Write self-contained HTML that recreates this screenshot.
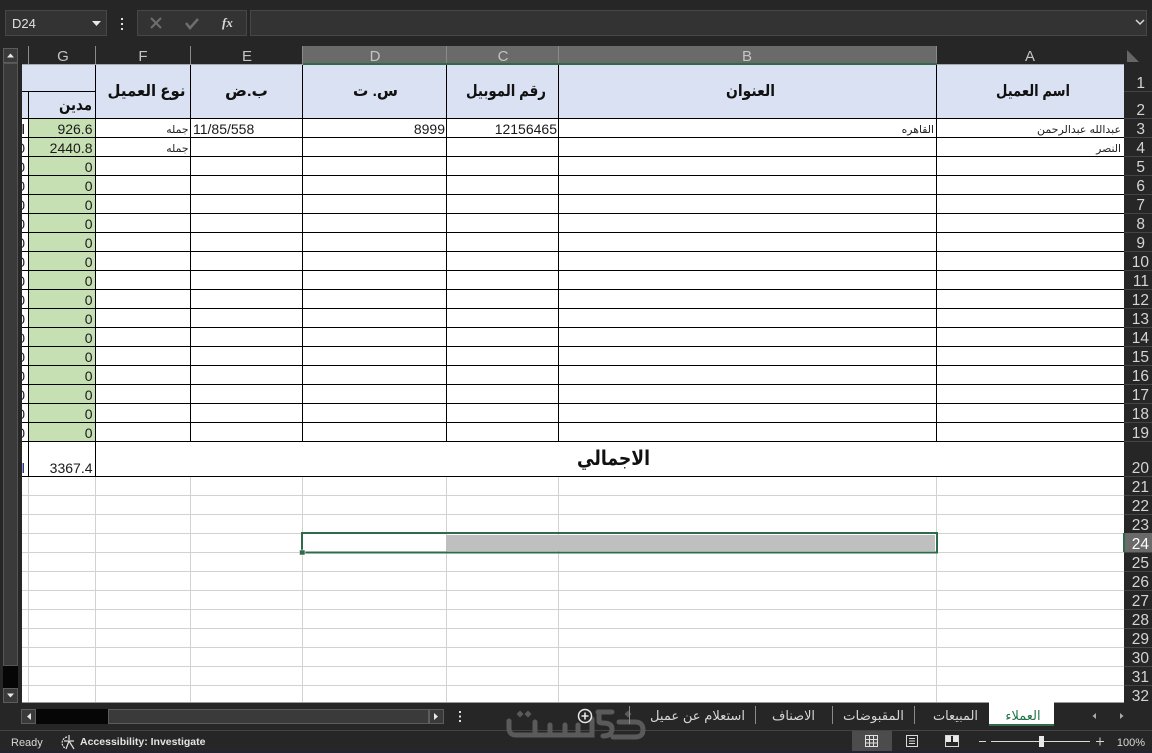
<!DOCTYPE html>
<html><head><meta charset="utf-8"><style>
html,body{margin:0;padding:0;background:#262626;overflow:hidden}
svg{display:block}
text{font-family:"Liberation Sans","DejaVu Sans",sans-serif}
.n{font-size:14px;fill:#1a1a1a;text-anchor:end}
.z{font-size:14px;fill:#1a1a1a;text-anchor:end}
.s{font-size:10.8px;fill:#222;text-anchor:end}
.h{font-size:16px;font-weight:bold;fill:#111;text-anchor:middle}
.c{font-size:15px;fill:#c4c4c4;text-anchor:middle}
.r{font-size:15.5px;fill:#d4d4d4;text-anchor:end}
.t{font-size:13px;fill:#d6d6d6;text-anchor:middle}
</style></head><body>
<svg width="1152" height="753" viewBox="0 0 1152 753" xmlns="http://www.w3.org/2000/svg">
<defs><clipPath id="sl"><rect x="22" y="65" width="6" height="420"/></clipPath></defs>
<rect width="1152" height="753" fill="#262626"/>
<!-- formula bar -->
<rect x="5.5" y="10.5" width="101" height="25" fill="#333" stroke="#474747"/>
<text x="12" y="28" font-size="13" fill="#e0e0e0">D24</text>
<path d="M92 21h9l-4.5 5z" fill="#e8e8e8"/>
<path d="M122 18v2M122 23v2M122 28v2" stroke="#e0e0e0" stroke-width="2"/>
<rect x="137.5" y="10.5" width="109" height="25" fill="#333" stroke="#474747"/>
<path d="M151 18l10 10M161 18l-10 10" stroke="#6e6e6e" stroke-width="2"/>
<path d="M186 23l4 5 8-9" stroke="#6e6e6e" stroke-width="2.5" fill="none"/>
<text x="222" y="27" font-size="13" font-style="italic" font-weight="bold" fill="#d8d8d8" style="font-family:'Liberation Serif',serif">fx</text>
<rect x="250.5" y="10.5" width="896" height="25" fill="#333" stroke="#474747"/>
<path d="M1136 20l4 4 4-4" stroke="#d8d8d8" stroke-width="1.5" fill="none"/>
<!-- column headers -->
<rect x="303" y="46" width="634" height="18" fill="#6a6a6a"/>
<path d="M28.5 46v18M95.5 46v18M190.5 46v18M302.5 46v18M446.5 46v18M558.5 46v18M936.5 46v18" stroke="#8a8a8a"/>
<rect x="22" y="64" width="1102" height="1" fill="#a8a8a8"/>
<rect x="303" y="63" width="634" height="2" fill="#2f6b4a"/>
<text class="c" x="63" y="61">G</text><text class="c" x="143" y="61">F</text><text class="c" x="247" y="61">E</text><text class="c" x="375" y="61">D</text><text class="c" x="503" y="61">C</text><text class="c" x="747" y="61">B</text><text class="c" x="1030" y="61">A</text>
<path d="M1127 62h12l-12-12z" fill="#666"/>
<!-- sheet -->
<rect x="22" y="65" width="1102" height="637" fill="#fff"/>
<rect x="22" y="65" width="1102" height="53" fill="#d9e1f2"/>
<rect x="29" y="118" width="67" height="323" fill="#c6e0b4"/>
<!-- light grid -->
<path d="M22 495.500H1124M22 514.500H1124M22 533.500H1124M22 552.500H1124M22 571.500H1124M22 590.500H1124M22 609.500H1124M22 628.500H1124M22 647.500H1124M22 666.500H1124M22 685.500H1124M28.500 476V702M95.500 476V702M190.500 476V702M302.500 476V702M446.500 476V702M558.500 476V702M936.500 476V702" stroke="#d2d2d2" fill="none"/>
<!-- black grid -->
<path d="M22 118.500H1124M22 137.500H1124M22 156.500H1124M22 175.500H1124M22 194.500H1124M22 213.500H1124M22 232.500H1124M22 251.500H1124M22 270.500H1124M22 289.500H1124M22 308.500H1124M22 327.500H1124M22 346.500H1124M22 365.500H1124M22 384.500H1124M22 403.500H1124M22 422.500H1124M22 441.500H1124M22 476.500H1124M22 91.500H95M28.500 92V476M95.500 65V476M190.500 65V441M302.500 65V441M446.500 65V441M558.500 65V441M936.500 65V441" stroke="#000" fill="none"/>
<!-- headers -->
<text class="h" x="146.500" y="96" direction="rtl" textLength="78" lengthAdjust="spacingAndGlyphs">نوع العميل</text>
<text class="h" x="246.500" y="96" direction="rtl" textLength="43" lengthAdjust="spacingAndGlyphs">ب.ض</text>
<text class="h" x="375.500" y="96" direction="rtl" textLength="45" lengthAdjust="spacingAndGlyphs">س. ت</text>
<text class="h" x="506" y="96" direction="rtl" textLength="80" lengthAdjust="spacingAndGlyphs">رقم الموبيل</text>
<text class="h" x="750.500" y="96" direction="rtl" textLength="49" lengthAdjust="spacingAndGlyphs">العنوان</text>
<text class="h" x="1033" y="96" direction="rtl" textLength="74" lengthAdjust="spacingAndGlyphs">اسم العميل</text>
<text class="h" x="75.500" y="110" direction="rtl" textLength="33" lengthAdjust="spacingAndGlyphs">مدين</text>
<!-- data -->
<text class="n" x="92.500" y="134">926.6</text><text class="n" x="92.500" y="153">2440.8</text>
<text class="n" x="92.500" y="172">0</text><text class="n" x="92.500" y="191">0</text><text class="n" x="92.500" y="210">0</text><text class="n" x="92.500" y="229">0</text><text class="n" x="92.500" y="248">0</text><text class="n" x="92.500" y="267">0</text><text class="n" x="92.500" y="286">0</text><text class="n" x="92.500" y="305">0</text><text class="n" x="92.500" y="324">0</text><text class="n" x="92.500" y="343">0</text><text class="n" x="92.500" y="362">0</text><text class="n" x="92.500" y="381">0</text><text class="n" x="92.500" y="400">0</text><text class="n" x="92.500" y="419">0</text><text class="n" x="92.500" y="438">0</text>
<text class="n" x="92.500" y="473">3367.4</text>
<g clip-path="url(#sl)">
<text class="z" x="25" y="153">0</text><text class="z" x="25" y="172">0</text><text class="z" x="25" y="191">0</text><text class="z" x="25" y="210">0</text><text class="z" x="25" y="229">0</text><text class="z" x="25" y="248">0</text><text class="z" x="25" y="267">0</text><text class="z" x="25" y="286">0</text><text class="z" x="25" y="305">0</text><text class="z" x="25" y="324">0</text><text class="z" x="25" y="343">0</text><text class="z" x="25" y="362">0</text><text class="z" x="25" y="381">0</text><text class="z" x="25" y="400">0</text><text class="z" x="25" y="419">0</text><text class="z" x="25" y="438">0</text>
<text x="27" y="110" font-size="16" font-weight="bold" fill="#111" text-anchor="end" direction="rtl">د</text>
</g>
<rect x="22.500" y="124" width="1.500" height="10" fill="#222"/>
<rect x="22.500" y="463" width="1.500" height="10" fill="#223a80"/>
<text x="193" y="134" font-size="14" fill="#1a1a1a">11/85/558</text>
<text class="n" x="445" y="134">8999</text><text class="n" x="557" y="134">12156465</text>
<text class="s" x="188.500" y="133">جمله</text><text class="s" x="188.500" y="152">جمله</text>
<text class="s" x="934" y="133">القاهره</text>
<text class="s" x="1121" y="133" direction="rtl" text-anchor="start" textLength="84" lengthAdjust="spacingAndGlyphs" style="text-anchor:start">عبدالله عبدالرحمن</text><text class="s" x="1121" y="152">النصر</text>
<text x="613.500" y="465" font-size="20.500" font-weight="bold" fill="#111" text-anchor="middle" direction="rtl" textLength="73" lengthAdjust="spacingAndGlyphs">الاجمالي</text>
<!-- selection -->
<rect x="446" y="535" width="489" height="16" fill="#bfbfbf"/>
<rect x="302" y="533" width="635" height="19.500" fill="none" stroke="#2f6b4a" stroke-width="2"/>
<rect x="299.500" y="550" width="5.500" height="5" fill="#2f6b4a" stroke="#fff" stroke-width=".5"/>
<!-- row headers -->
<rect x="1124" y="65" width="28" height="637" fill="#262626"/>
<rect x="1124" y="533" width="28" height="19" fill="#6a6a6a"/>
<rect x="1123" y="533" width="2" height="19" fill="#2f6b4a"/>
<path d="M1124 91.500h28M1124 118.500h28M1124 137.500h28M1124 156.500h28M1124 175.500h28M1124 194.500h28M1124 213.500h28M1124 232.500h28M1124 251.500h28M1124 270.500h28M1124 289.500h28M1124 308.500h28M1124 327.500h28M1124 346.500h28M1124 365.500h28M1124 384.500h28M1124 403.500h28M1124 422.500h28M1124 441.500h28M1124 476.500h28M1124 495.500h28M1124 514.500h28M1124 552.500h28M1124 571.500h28M1124 590.500h28M1124 609.500h28M1124 628.500h28M1124 647.500h28M1124 666.500h28M1124 685.500h28" stroke="#444"/>
<text class="r" x="1145" y="88">1</text><text class="r" x="1145" y="115">2</text><text class="r" x="1145" y="134">3</text><text class="r" x="1145" y="153">4</text><text class="r" x="1145" y="172">5</text><text class="r" x="1145" y="191">6</text><text class="r" x="1145" y="210">7</text><text class="r" x="1145" y="229">8</text><text class="r" x="1145" y="248">9</text><text class="r" x="1149" y="267">10</text><text class="r" x="1149" y="286">11</text><text class="r" x="1149" y="305">12</text><text class="r" x="1149" y="324">13</text><text class="r" x="1149" y="343">14</text><text class="r" x="1149" y="362">15</text><text class="r" x="1149" y="381">16</text><text class="r" x="1149" y="400">17</text><text class="r" x="1149" y="419">18</text><text class="r" x="1149" y="438">19</text><text class="r" x="1149" y="473">20</text><text class="r" x="1149" y="492">21</text><text class="r" x="1149" y="511">22</text><text class="r" x="1149" y="530">23</text><text class="r" x="1149" y="549" style="fill:#fff">24</text><text class="r" x="1149" y="568">25</text><text class="r" x="1149" y="587">26</text><text class="r" x="1149" y="606">27</text><text class="r" x="1149" y="625">28</text><text class="r" x="1149" y="644">29</text><text class="r" x="1149" y="663">30</text><text class="r" x="1149" y="682">31</text><text class="r" x="1149" y="701">32</text>
<!-- vertical scrollbar -->
<rect x="3.500" y="48.500" width="14" height="14" fill="#3a3a3a" stroke="#5c5c5c"/>
<path d="M7 57.500h7l-3.500-4z" fill="#e8e8e8"/>
<rect x="3.500" y="63.500" width="14" height="602" fill="#3a3a3a" stroke="#555"/>
<rect x="3" y="666" width="15" height="22" fill="#060606"/>
<rect x="3.500" y="688.500" width="14" height="14" fill="#3a3a3a" stroke="#5c5c5c"/>
<path d="M7 693.500h7l-3.500 4z" fill="#e8e8e8"/>
<rect x="18" y="46" width="4" height="657" fill="#262626"/>
<rect x="22" y="702" width="1102" height="1" fill="#9a9a9a"/>
<!-- horizontal scrollbar -->
<rect x="21.500" y="709.500" width="14" height="14" fill="#3a3a3a" stroke="#5c5c5c"/>
<path d="M31 713v7l-4-3.500z" fill="#e8e8e8"/>
<rect x="36" y="709" width="72" height="15" fill="#060606"/>
<rect x="108.500" y="709.500" width="320" height="14" fill="#3a3a3a" stroke="#5c5c5c"/>
<rect x="429.500" y="709.500" width="14" height="14" fill="#3a3a3a" stroke="#5c5c5c"/>
<path d="M434 713v7l4-3.500z" fill="#e8e8e8"/>
<path d="M460 711v2M460 715.500v2M460 720v2" stroke="#e0e0e0" stroke-width="2"/>
<!-- divider and status -->
<rect x="0" y="730" width="1152" height="1" fill="#444"/>
<rect x="0" y="751" width="1152" height="2" fill="#1f2430"/>
<!-- watermark -->
<g stroke="#5a5a5a" stroke-width="5" fill="none" stroke-linecap="round">
<path d="M509 721v7q0 7 7 7h76v-16M535 722v13M550 725v10M565 725v10M578 725v10"/>
<path d="M598 712h14M599 712v9q0 2 4 2q9 0 9 6q0 7-9 7"/>
<path d="M619 722h16q8 0 8 8q0 7-8 7h-22"/>
</g>
<path d="M520 710.500l3.500 3.500-3.500 3.500-3.500-3.500zM528 710.500l3.500 3.500-3.500 3.500-3.500-3.500zM628 710.500l3.500 3.500-3.500 3.500-3.500-3.500z" fill="#5a5a5a"/>
<!-- tabs -->
<rect x="989" y="702" width="65" height="24" fill="#fff"/>
<rect x="989" y="724" width="65" height="2" fill="#2f6b4a"/>
<text x="1023" y="720" font-size="13" fill="#217346" text-anchor="middle">العملاء</text>
<text class="t" x="955.500" y="720" textLength="45" lengthAdjust="spacingAndGlyphs">المبيعات</text>
<text class="t" x="873.500" y="720" textLength="61" lengthAdjust="spacingAndGlyphs">المقبوضات</text>
<text class="t" x="793.500" y="720" textLength="43" lengthAdjust="spacingAndGlyphs">الاصناف</text>
<text class="t" x="697.500" y="720" textLength="95" lengthAdjust="spacingAndGlyphs">استعلام عن عميل</text>
<path d="M914.500 706v18M832.500 706v18M755.500 706v18M629.500 706v18" stroke="#8a8a8a"/>
<circle cx="585" cy="716" r="6.500" fill="#262626" stroke="#e8e8e8" stroke-width="1.500"/>
<path d="M581.500 716h7M585 712.500v7" stroke="#e8e8e8" stroke-width="1.600"/>
<path d="M1096 713v6l-3.500-3zM1120 713v6l3.500-3z" fill="#a8a8a8"/>
<!-- status bar -->
<text x="11" y="746" font-size="11" fill="#d8d8d8">Ready</text>
<g stroke="#e0e0e0" stroke-width="1.200" fill="none"><path d="M67 737a6 6 0 0 0 -2 11" stroke-dasharray="2 1"/><path d="M69 735v5M64 741h10M69 741l-3 8M69 741l5 8"/></g>
<text x="80" y="745" font-size="10.500" font-weight="bold" fill="#e4e4e4">Accessibility: Investigate</text>
<rect x="852" y="731" width="40" height="20" fill="#4c4c4c"/>
<path d="M865.500 735.500h12v11h-12zM865.500 739.500h12M865.500 743h12M869.500 735.500v11M873.500 735.500v11" stroke="#e0e0e0" fill="none"/>
<path d="M906.500 735.500h11v11h-11zM909 738.500h6M909 741h6M909 743.500h6" stroke="#d8d8d8" fill="none"/>
<path d="M945.500 735.500h13v11h-13z" stroke="#d8d8d8" fill="none"/><rect x="946" y="736" width="5" height="6" fill="#e8e8e8"/><rect x="953" y="736" width="5" height="6" fill="#e8e8e8"/>
<path d="M979 741.500h7M991 741.500h99M1096 741.500h8M1100 737.500v8" stroke="#d8d8d8" fill="none"/>
<rect x="1039" y="736" width="5" height="11" fill="#e8e8e8"/>
<text x="1145" y="746" font-size="11" fill="#d8d8d8" text-anchor="end">100%</text>
</svg>
</body></html>
